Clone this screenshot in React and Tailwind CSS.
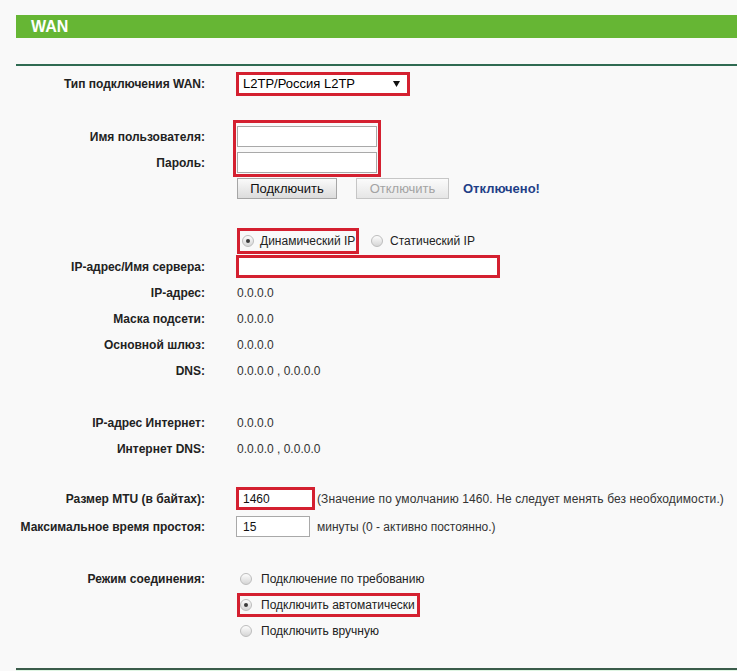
import React from "react";

function Radio({ checked }) {
  return (
    <span className="w-[12px] h-[12px] rounded-full border border-[#bdbdbd] bg-linear-to-b from-[#fdfdfd] to-[#d6d6d6] flex items-center justify-center shrink-0">
      {checked && <span className="w-[4px] h-[4px] rounded-full bg-[#3a3a3a]" />}
    </span>
  );
}

function Label({ children }) {
  return <div className="w-[205px] shrink-0 text-right font-bold text-[#222] whitespace-nowrap">{children}</div>;
}

function ValueRow({ label, value, className }) {
  return (
    <div className={"flex items-center h-[26px] " + (className || "")}>
      <Label>{label}</Label>
      <div className="ml-[32px] text-[#333] whitespace-nowrap">{value}</div>
    </div>
  );
}

export default function App() {
  return (
    <div className="w-[737px] h-[671px] overflow-hidden bg-[#f9f9f9] font-['Liberation_Sans',Arial,sans-serif] text-[12px] text-[#333] pt-[15px] whitespace-nowrap">
      <div className="ml-[16px] h-[23px] bg-[#66b634] flex items-center pl-[15px] text-white font-bold text-[16px]">WAN</div>
      <div className="ml-[16px] mt-[26px] h-[2px] bg-[#2f6b52]" />

      {/* WAN type */}
      <div className="flex items-center mt-[6px] h-[24px]">
        <Label>Тип подключения WAN:</Label>
        <div className="ml-[31px] w-[174px] h-[24px] border-[3px] border-[#d42030] bg-white flex items-center justify-between pl-[4px] pr-[7px] text-[13px] text-black">
          <span>L2TP/Россия L2TP</span>
          <svg width="7" height="6" viewBox="0 0 7 6"><path d="M0 0H7L3.5 6Z" fill="#111" /></svg>
        </div>
      </div>

      {/* Username / password */}
      <div className="flex mt-[24px]">
        <div className="w-[205px] shrink-0 pt-[6px] flex flex-col gap-[5px]">
          <div className="h-[21px] flex items-center justify-end font-bold text-[#222]">Имя пользователя:</div>
          <div className="h-[21px] flex items-center justify-end font-bold text-[#222]">Пароль:</div>
        </div>
        <div className="ml-[28px] border-[3px] border-[#d42030] pt-[3px] pb-[1px] px-[1px] flex flex-col gap-[5px]">
          <div className="w-[140px] h-[21px] border border-[#a9a9a9] bg-white" />
          <div className="w-[140px] h-[21px] border border-[#a9a9a9] bg-white" />
        </div>
      </div>

      {/* Buttons */}
      <div className="flex items-center mt-[1px] h-[21px]">
        <div className="w-[205px] shrink-0" />
        <div className="ml-[32px] w-[100px] h-[21px] border border-[#a6a6a6] bg-linear-to-b from-[#fafafa] to-[#dcdcdc] flex items-center justify-center text-[13px] text-[#111]">Подключить</div>
        <div className="ml-[19px] w-[93px] h-[21px] border border-[#c6c6c6] bg-linear-to-b from-[#fbfbfb] to-[#e6e6e6] flex items-center justify-center text-[13px] text-[#a3a3a3]">Отключить</div>
        <div className="ml-[14px] text-[13px] font-bold text-[#1f3f87]">Отключено!</div>
      </div>

      {/* IP type radios */}
      <div className="flex items-center mt-[29px] h-[26px]">
        <div className="w-[205px] shrink-0" />
        <div className="ml-[32px] w-[122px] h-[26px] border-[3px] border-[#d42030] flex items-center pl-[2px] gap-[6px]">
          <Radio checked />
          <span className="text-[#222]">Динамический IP</span>
        </div>
        <div className="ml-[12px] flex items-center gap-[7px]">
          <Radio />
          <span className="text-[#222]">Статический IP</span>
        </div>
      </div>

      {/* Server */}
      <div className="flex items-center mt-[1px] h-[23px]">
        <Label>IP-адрес/Имя сервера:</Label>
        <div className="ml-[31px] w-[264px] h-[23px] border-[3px] border-[#d42030] bg-white" />
      </div>

      <ValueRow className="mt-[2px]" label="IP-адрес:" value="0.0.0.0" />
      <ValueRow label="Маска подсети:" value="0.0.0.0" />
      <ValueRow label="Основной шлюз:" value="0.0.0.0" />
      <ValueRow label="DNS:" value="0.0.0.0 , 0.0.0.0" />

      <ValueRow className="mt-[26px]" label="IP-адрес Интернет:" value="0.0.0.0" />
      <ValueRow label="Интернет DNS:" value="0.0.0.0 , 0.0.0.0" />

      {/* MTU */}
      <div className="flex items-center mt-[25px] h-[23px]">
        <Label>Размер MTU (в байтах):</Label>
        <div className="ml-[31px] w-[79px] h-[23px] border-[3px] border-[#d42030] bg-white flex items-center pl-[4px] text-[12px] text-[#111]">1460</div>
        <div className="ml-[2px] text-[#333] tracking-[0.1px]">(Значение по умолчанию 1460. Не следует менять без необходимости.)</div>
      </div>

      {/* Idle */}
      <div className="flex items-center mt-[6px] h-[21px]">
        <Label>Максимальное время простоя:</Label>
        <div className="ml-[31px] w-[74px] h-[21px] border border-[#a9a9a9] bg-white flex items-center pl-[6px] text-[12px] text-[#111]">15</div>
        <div className="ml-[7px] text-[#333]">минуты (0 - активно постоянно.)</div>
      </div>

      {/* Mode */}
      <div className="flex items-center mt-[29px] h-[26px]">
        <Label>Режим соединения:</Label>
        <div className="ml-[35px] flex items-center gap-[9px]">
          <Radio />
          <span className="text-[#222]">Подключение по требованию</span>
        </div>
      </div>
      <div className="flex items-center mt-[1px] h-[24px]">
        <div className="w-[205px] shrink-0" />
        <div className="ml-[32px] h-[24px] border-[3px] border-[#d42030] flex items-center gap-[9px] pr-[2px]">
          <Radio checked />
          <span className="text-[#222]">Подключить автоматически</span>
        </div>
      </div>
      <div className="flex items-center mt-[1px] h-[26px]">
        <div className="w-[205px] shrink-0" />
        <div className="ml-[35px] flex items-center gap-[9px]">
          <Radio />
          <span className="text-[#222]">Подключить вручную</span>
        </div>
      </div>

      <div className="ml-[16px] mt-[24px] h-[2px] bg-[#3b5c4b]" />
      <div className="ml-[16px] h-[1px] bg-[#dff5e3]" />
    </div>
  );
}
